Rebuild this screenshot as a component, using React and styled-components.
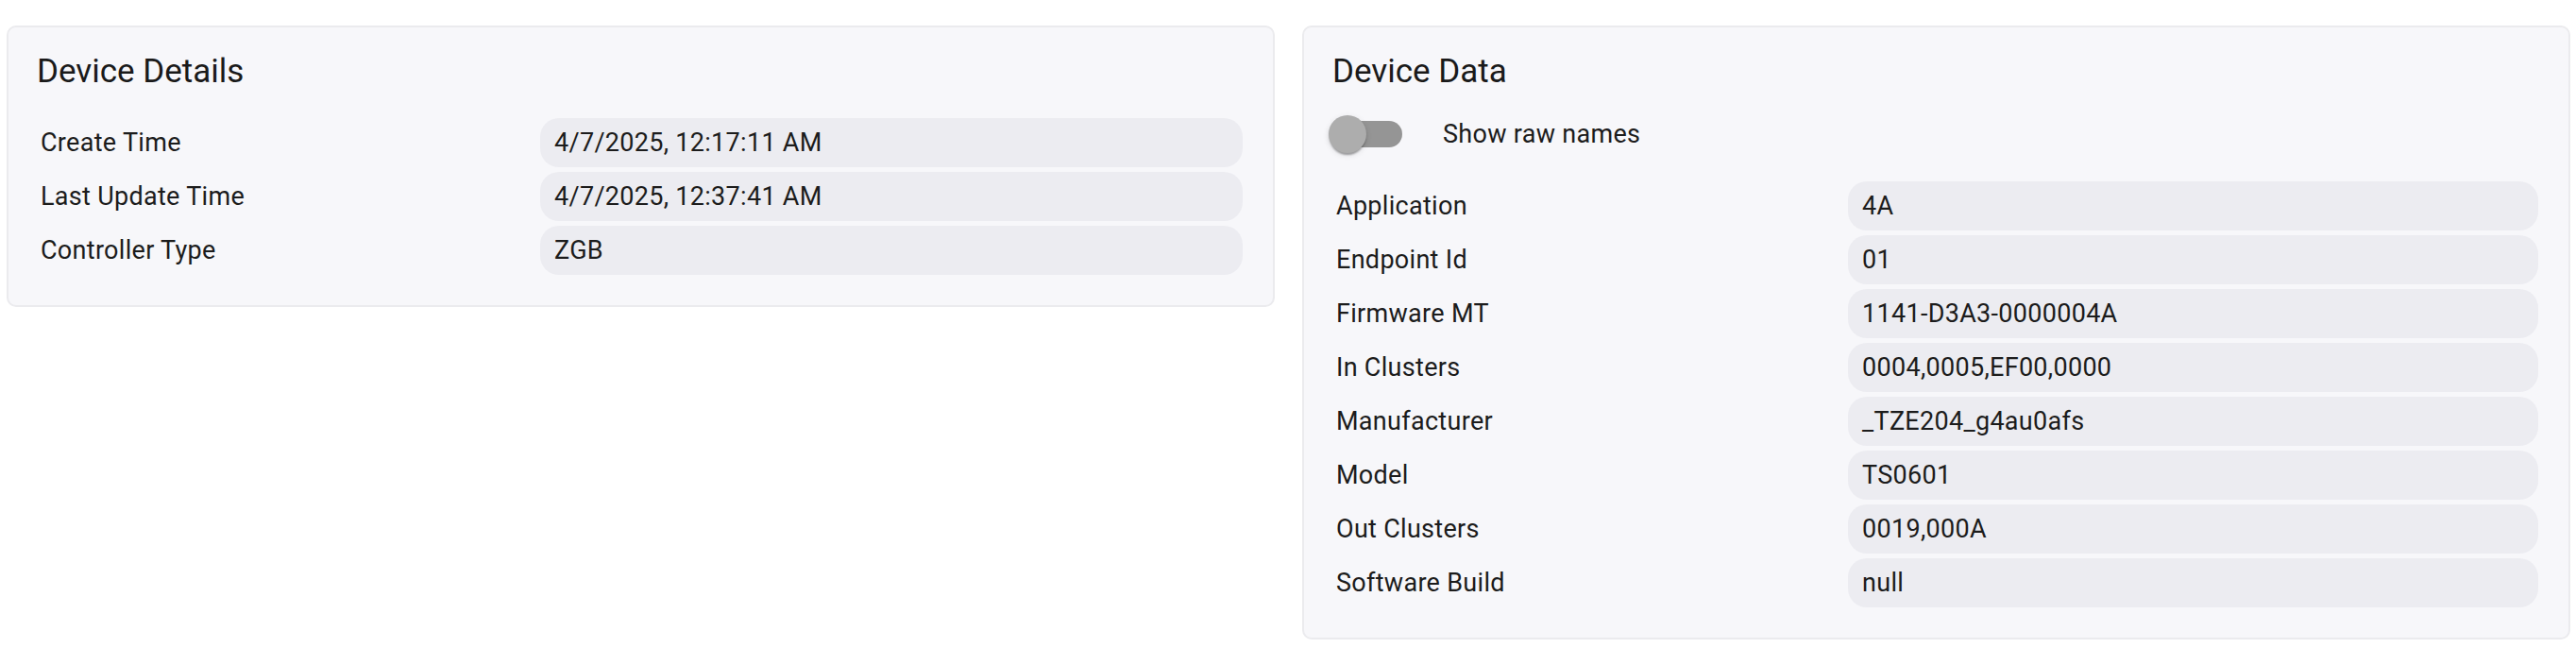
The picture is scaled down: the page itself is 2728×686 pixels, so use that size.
import React, { useState } from 'react';
import styled, { createGlobalStyle } from 'styled-components';

const GlobalStyle = createGlobalStyle`
  body {
    margin: 0;
    background: #ffffff;
    font-family: Roboto, "Liberation Sans", sans-serif;
    color: #1c1c1c;
  }
`;

const Page = styled.div`
  display: grid;
  grid-template-columns: 1fr 1fr;
  column-gap: 29px;
  align-items: start;
  padding: 27px 6px 0 7px;
`;

const Card = styled.section`
  background: #f7f7fa;
  border: 2px solid #ebebee;
  border-radius: 10px;
  padding: 27px 32px 32px 30px;
`;

const Title = styled.h2`
  margin: 0 0 ${(props) => props.$spacing}px;
  font-size: 35px;
  line-height: 40px;
  font-weight: 400;
  color: #1a1a1a;
`;

const SwitchRow = styled.label`
  display: flex;
  align-items: center;
  gap: 23px;
  margin: 0 0 12px -22px;
  cursor: pointer;
`;

const SwitchRoot = styled.span`
  position: relative;
  display: inline-block;
  width: 116px;
  height: 76px;
  flex-shrink: 0;
`;

const Track = styled.span`
  position: absolute;
  left: 28px;
  top: 24px;
  width: 68px;
  height: 28px;
  border-radius: 14px;
  background: #959595;
`;

const Thumb = styled.span`
  position: absolute;
  left: ${(props) => (props.$on ? 58 : 18)}px;
  top: 18px;
  width: 40px;
  height: 40px;
  border-radius: 50%;
  background: #adadad;
  box-shadow: 0 4px 2px -2px rgba(0, 0, 0, 0.2), 0 2px 2px 0 rgba(0, 0, 0, 0.14),
    0 2px 6px 0 rgba(0, 0, 0, 0.12);
  transition: left 0.15s;
`;

const Text = styled.span`
  font-size: 27px;
  letter-spacing: 0.3px;
  color: #1c1c1c;
`;

const DataGrid = styled.div`
  display: grid;
  grid-template-columns: ${(props) => props.$labelWidth}px 1fr;
  row-gap: 5px;
`;

const Label = styled.div`
  display: flex;
  align-items: center;
  height: 52px;
  padding-left: 4px;
  font-size: 27px;
  letter-spacing: 0.3px;
  color: #1c1c1c;
`;

const Pill = styled.div`
  display: flex;
  align-items: center;
  height: 52px;
  padding: 0 15px;
  border-radius: 20px;
  background: #ececf1;
  font-size: 27px;
  letter-spacing: 0.3px;
  color: #1c1c1c;
`;

const details = [
  ['Create Time', '4/7/2025, 12:17:11 AM'],
  ['Last Update Time', '4/7/2025, 12:37:41 AM'],
  ['Controller Type', 'ZGB'],
];

const deviceData = [
  ['Application', '4A'],
  ['Endpoint Id', '01'],
  ['Firmware MT', '1141-D3A3-0000004A'],
  ['In Clusters', '0004,0005,EF00,0000'],
  ['Manufacturer', '_TZE204_g4au0afs'],
  ['Model', 'TS0601'],
  ['Out Clusters', '0019,000A'],
  ['Software Build', 'null'],
];

const InfoRows = ({ rows, labelWidth }) => (
  <DataGrid $labelWidth={labelWidth}>
    {rows.map(([label, value]) => (
      <React.Fragment key={label}>
        <Label>{label}</Label>
        <Pill>{value}</Pill>
      </React.Fragment>
    ))}
  </DataGrid>
);

export default function App() {
  const [raw, setRaw] = useState(false);

  return (
    <>
      <GlobalStyle />
      <Page>
        <Card>
          <Title $spacing={29}>Device Details</Title>
          <InfoRows rows={details} labelWidth={533} />
        </Card>
        <Card>
          <Title $spacing={8}>Device Data</Title>
          <SwitchRow onClick={() => setRaw(!raw)}>
            <SwitchRoot>
              <Track />
              <Thumb $on={raw} />
            </SwitchRoot>
            <Text>Show raw names</Text>
          </SwitchRow>
          <InfoRows rows={deviceData} labelWidth={546} />
        </Card>
      </Page>
    </>
  );
}
